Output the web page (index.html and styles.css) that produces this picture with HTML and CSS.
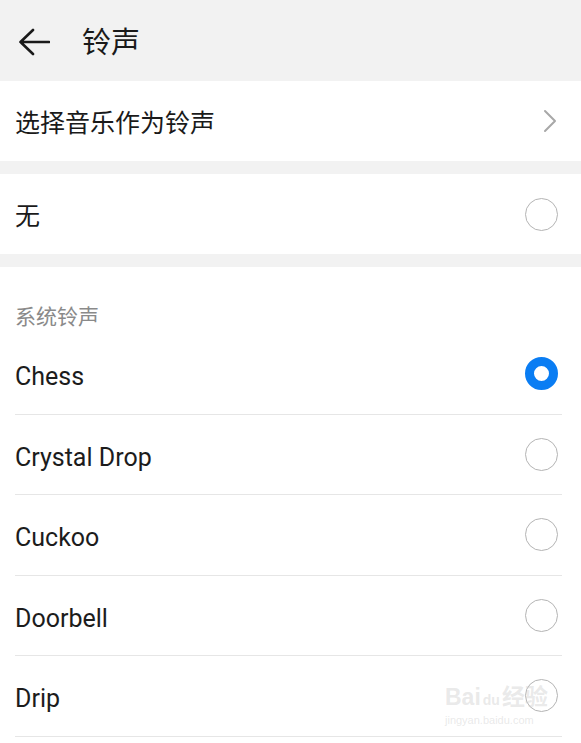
FILE: index.html
```html
<!DOCTYPE html>
<html lang="zh">
<head>
<meta charset="utf-8">
<title>铃声</title>
<link rel="stylesheet" href="styles.css">
</head>
<body>
<div class="page">
  <header class="topbar">
    <svg class="back" width="32" height="28" viewBox="0 0 32 28">
      <path d="M15 2 L2.5 14 L15 26 M2.5 14 H31" fill="none" stroke="#1a1a1a" stroke-width="2.6" stroke-linecap="round" stroke-linejoin="round"/>
    </svg>
    <h1 class="title">铃声</h1>
  </header>

  <div class="card">
    <div class="row">
      <span class="label">选择音乐作为铃声</span>
      <svg class="chev" width="14" height="24" viewBox="0 0 14 24">
        <path d="M2 2 L12 12 L2 22" fill="none" stroke="#a8a8a8" stroke-width="2" stroke-linecap="round" stroke-linejoin="round"/>
      </svg>
    </div>
  </div>

  <div class="card">
    <div class="row">
      <span class="label">无</span>
      <span class="radio"></span>
    </div>
  </div>

  <div class="section">
    <div class="section-title">系统铃声</div>
    <div class="item"><span class="label latin">Chess</span><span class="radio on"></span></div>
    <div class="item"><span class="label latin">Crystal Drop</span><span class="radio"></span></div>
    <div class="item"><span class="label latin">Cuckoo</span><span class="radio"></span></div>
    <div class="item"><span class="label latin">Doorbell</span><span class="radio"></span></div>
    <div class="item"><span class="label latin">Drip</span><span class="radio"></span></div>
    <div class="watermark">
      <span class="wm-logo">Bai<span class="wm-du">du</span>经验</span>
      <span class="wm-url">jingyan.baidu.com</span>
    </div>
  </div>
</div>
</body>
</html>
```

FILE: styles.css
```css
html, body {
  margin: 0;
  padding: 0;
  background: #f2f2f2;
}
body {
  font-family: "Roboto", "Noto Sans CJK SC", sans-serif;
  color: #1a1a1a;
  width: 581px;
  height: 743px;
  overflow: hidden;
}
.page {
  display: flex;
  flex-direction: column;
  gap: 13px;
  height: 743px;
}
.topbar {
  height: 81px;
  display: flex;
  align-items: center;
  padding-left: 18px;
  margin-bottom: -13px;
  background: #f2f2f2;
}
.back {
  display: block;
  margin-top: 2px;
}
.title {
  margin: 0 0 0 32px;
  font-family: "Noto Sans CJK SC", sans-serif;
  font-size: 29px;
  font-weight: 400;
  line-height: 1;
  color: #1a1a1a;
}
.card {
  background: #fff;
}
.row {
  height: 80px;
  display: flex;
  align-items: center;
  justify-content: space-between;
  padding: 0 23px 0 15px;
}
.row .chev {
  display: block;
  margin-right: 1px;
}
.label {
  font-family: "Noto Sans CJK SC", sans-serif;
  font-size: 25px;
  line-height: 1;
  color: #1a1a1a;
}
.label.latin {
  font-family: "Roboto", "Noto Sans CJK SC", sans-serif;
  font-size: 25px;
  color: #1c1c1c;
}
.radio {
  box-sizing: border-box;
  width: 33px;
  height: 33px;
  border-radius: 50%;
  border: 1.6px solid #b4b4b4;
  background: #fff;
  flex: none;
}
.radio.on {
  border: 9.5px solid #0a7df3;
}
.section {
  flex: 1;
  background: #fff;
  position: relative;
}
.section-title {
  padding: 36px 15px 7px;
  line-height: 24px;
  font-family: "Noto Sans CJK SC", sans-serif;
  font-size: 21px;
  color: #8a8a8a;
}
.item {
  height: 79.5px;
  margin: 0 19px 0 15px;
  display: flex;
  align-items: center;
  justify-content: space-between;
  padding-right: 4px;
  border-bottom: 1px solid #e6e6e6;
}
.item .label { margin-top: 6px; }
.watermark {
  position: absolute;
  left: 445px;
  top: 418px;
  display: flex;
  flex-direction: column;
  align-items: flex-start;
  pointer-events: none;
  color: rgba(200, 200, 200, 0.4);
}
.wm-logo {
  font-family: "Liberation Sans", "Noto Sans CJK SC", sans-serif;
  font-size: 23px;
  font-weight: 700;
  line-height: 25px;
}
.wm-du {
  font-size: 14px;
  margin: 0 2px;
}
.wm-url {
  font-family: "Liberation Sans", sans-serif;
  font-size: 11px;
  line-height: 14px;
}
```
